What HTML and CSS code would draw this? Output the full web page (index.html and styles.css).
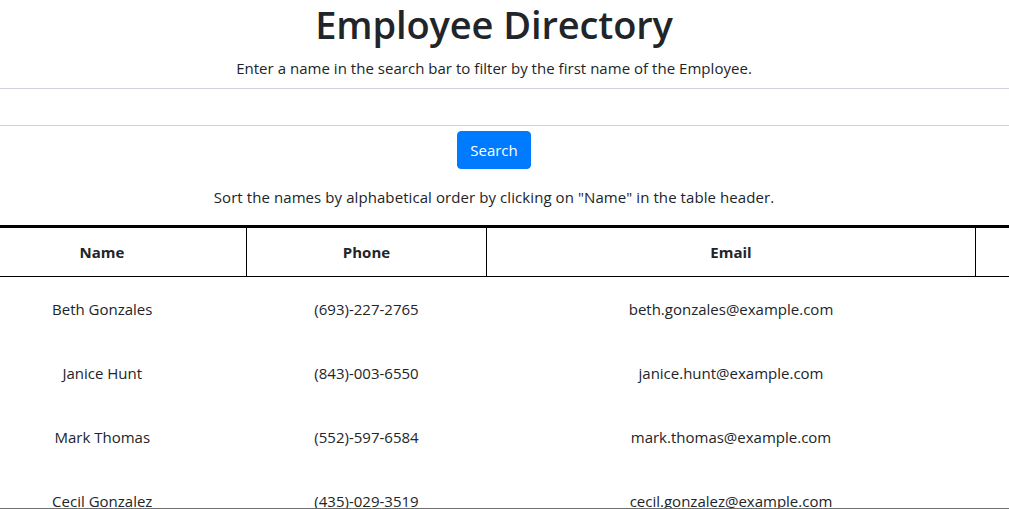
FILE: index.html
```html
<!DOCTYPE html>
<html>
<head>
<meta charset="utf-8">
<link rel="stylesheet" href="styles.css">
</head>
<body>
<div class="page">
  <header class="intro">
    <h1 class="title">Employee Directory</h1>
    <p class="lead">Enter a name in the search bar to filter by the first name of the Employee.</p>
  </header>
  <form class="search">
    <input class="search-input" type="text">
    <button class="search-btn" type="button">Search</button>
  </form>
  <p class="hint">Sort the names by alphabetical order by clicking on "Name" in the table header.</p>
  <div class="table-wrap">
    <table class="dir">
      <thead>
        <tr>
          <th class="c-name">Name</th>
          <th class="c-phone">Phone</th>
          <th class="c-email">Email</th>
          <th class="c-dob"></th>
        </tr>
      </thead>
      <tbody>
        <tr><td>Beth Gonzales</td><td>(693)-227-2765</td><td>beth.gonzales@example.com</td><td></td></tr>
        <tr><td>Janice Hunt</td><td>(843)-003-6550</td><td>janice.hunt@example.com</td><td></td></tr>
        <tr><td>Mark Thomas</td><td>(552)-597-6584</td><td>mark.thomas@example.com</td><td></td></tr>
        <tr><td>Cecil Gonzalez</td><td>(435)-029-3519</td><td>cecil.gonzalez@example.com</td><td></td></tr>
      </tbody>
    </table>
  </div>
</div>
<div class="bottom-edge"></div>
</body>
</html>
```
FILE: styles.css
```css
html, body {
  margin: 0;
  padding: 0;
  overflow: hidden;
}
body {
  font-family: "Open Sans", "Noto Sans", sans-serif;
  font-size: 15px;
  color: #212529;
  background: #fff;
}
.page {
  width: 988px;
  display: flex;
  flex-direction: column;
  align-items: center;
}
.intro {
  display: flex;
  flex-direction: column;
  align-items: center;
}
.title {
  margin: 0 0 8px;
  font-size: 38px;
  font-weight: 600;
  line-height: 48px;
  letter-spacing: -0.1px;
}
.lead {
  margin: 0;
  line-height: 24px;
  font-size: 15px;
  letter-spacing: 0.03px;
}
.search {
  margin-top: 8px;
  width: 100%;
  display: flex;
  flex-direction: column;
  align-items: center;
  gap: 5px;
}
.search-input {
  box-sizing: border-box;
  width: 1040px;
  height: 38px;
  margin: 0;
  border: 0;
  border-top: 1px solid #ced4da;
  border-bottom: 1px solid #ced4da;
  font: inherit;
}
.search-btn {
  height: 38px;
  padding: 0 12px;
  border: 1px solid #007bff;
  border-radius: 4px;
  background: #007bff;
  color: #fff;
  font: inherit;
  font-size: 15px;
}
.hint {
  margin: 16px 0 0;
  line-height: 24px;
  font-size: 15px;
  letter-spacing: 0.08px;
}
.table-wrap {
  align-self: flex-start;
  margin-top: 16px;
  margin-left: -42px;
}
.dir {
  border-collapse: collapse;
  table-layout: fixed;
  width: 1400px;
  font-size: 15px;
}
.dir th {
  height: 48px;
  padding: 0;
  font-weight: 700;
  border-top: 3px solid #000;
  border-bottom: 1px solid #000;
  border-left: 1px solid #000;
  text-align: center;
}
.dir th:first-child {
  border-left: 0;
}
.c-name { width: 288px; }
.c-phone { width: 239px; }
.c-email { width: 488px; }
.dir td {
  height: 64px;
  padding: 0;
  text-align: center;
}
.bottom-edge {
  position: fixed;
  left: 0;
  right: 0;
  bottom: 0;
  height: 1px;
  background: #6f6f6f;
}
```
